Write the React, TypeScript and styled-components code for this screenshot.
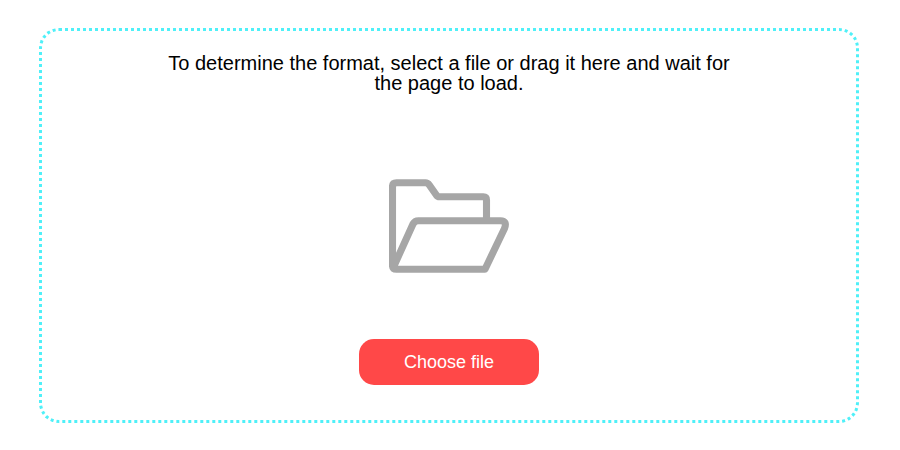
import React from "react";
import styled, { createGlobalStyle } from "styled-components";

const GlobalStyle = createGlobalStyle`
  * { box-sizing: border-box; }
  body { margin: 0; background: #fff; font-family: "Liberation Sans", Arial, sans-serif; }
`;

const Page = styled.main`
  height: 450px;
  padding: 28px 41px 27px 39px;
`;

const DropZone = styled.section`
  height: 395px;
  display: flex;
  flex-direction: column;
  align-items: center;
  border: 3px dotted #4ff0f8;
  border-radius: 20px;
  padding-top: 22px;
`;

const Hint = styled.p`
  margin: 0;
  width: 574px;
  height: 40px;
  font-size: 20px;
  line-height: 20px;
  text-align: center;
  color: #000;
`;

const FolderIcon = styled.svg`
  display: block;
  width: 120px;
  height: 94px;
  margin-top: 86px;
`;

const ChooseButton = styled.button`
  width: 180px;
  height: 46px;
  margin-top: 66px;
  padding: 0;
  border: 0;
  border-radius: 15px;
  background: #ff4848;
  color: #fff;
  font: 18px "Liberation Sans", Arial, sans-serif;
  cursor: pointer;
`;

export default function App() {
  return (
    <>
      <GlobalStyle />
      <Page>
        <DropZone>
          <Hint>To determine the format, select a file or drag it here and wait for the page to load.</Hint>
          <FolderIcon viewBox="0 0 120 94" fill="none" stroke="#a6a6a6" strokeWidth="7.1" strokeLinejoin="round" aria-hidden="true">
            <path d="M97.500 41.500V21Q97.500 17.800 94.300 17.800H50.500Q48.500 17.800 47.300 16L40.300 6Q38.700 3.800 36.500 3.800H7.500Q3.500 3.800 3.500 7.800V86.200Q3.500 90.200 7.500 90.200H96L115.500 49.500Q118.500 41.700 111.500 41.700H29.500Q25.700 41.700 24 45L5.200 86.500" />
          </FolderIcon>
          <ChooseButton type="button">Choose file</ChooseButton>
        </DropZone>
      </Page>
    </>
  );
}
